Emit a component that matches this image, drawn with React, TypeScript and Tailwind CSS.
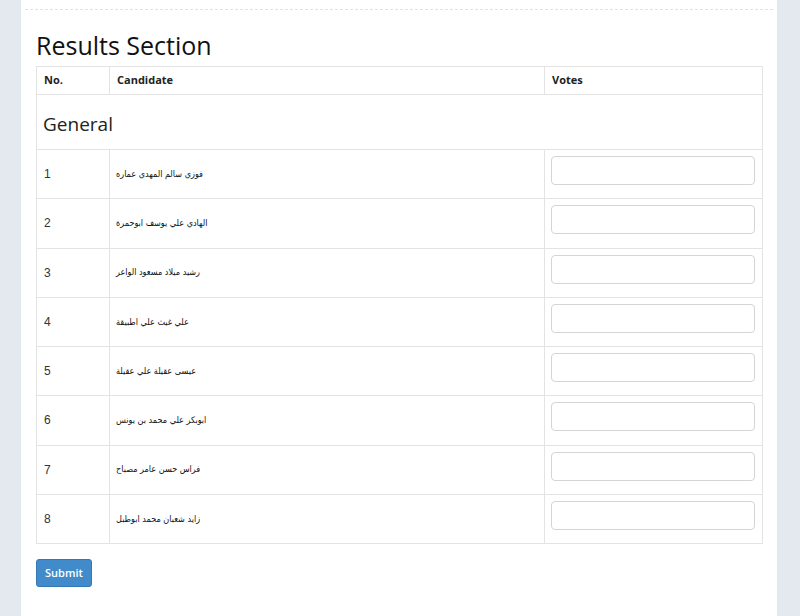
import React from "react";

const CANDIDATES = [
  "فوزي سالم المهدي عماره",
  "الهادي علي يوسف ابوحمرة",
  "رشيد ميلاد مسعود الواعر",
  "علي غيث علي اطبيقة",
  "عيسى عقيلة علي عقيلة",
  "ابوبكر علي محمد بن يونس",
  "فراس حسن عامر مصباح",
  "زايد شعبان محمد ابوطبل",
];

export default function App() {
  return (
    <div className="min-h-[616px] bg-[#e4e9f0] flex" style={{ fontFamily: '"Open Sans", sans-serif' }}>
      <div className="ml-[21px] w-[756px] bg-white min-h-[616px]">
        <div className="mx-1 mt-[9px] border-t border-dashed border-[#dfe3e8]" />

        <div className="px-[15px]">
          <h1 className="mt-[20px] mb-[6px] text-[25px] leading-[30px] text-[#111] font-normal">Results Section</h1>

          <table className="w-[727px] border-collapse text-[#333]">
            <thead>
              <tr className="h-[28px]">
                <th className="w-[73px] border border-[#e3e3e3] px-[7px] text-left text-[11px] font-bold text-[#222]">No.</th>
                <th className="w-[435px] border border-[#e3e3e3] px-[7px] text-left text-[11px] font-bold text-[#222]">Candidate</th>
                <th className="border border-[#e3e3e3] px-[7px] text-left text-[11px] font-bold text-[#222]">Votes</th>
              </tr>
            </thead>
            <tbody>
              <tr className="h-[55px]">
                <td colSpan={3} className="border border-[#e3e3e3] px-[6px] pt-[4px] text-[19px] text-[#222]">General</td>
              </tr>
              {CANDIDATES.map((name, i) => (
                <tr key={i} className="h-[49.25px]">
                  <td className="border border-[#e3e3e3] px-[7px] text-[12px] text-[#333]" style={{ fontFamily: '"Liberation Sans", Arial, sans-serif' }}>
                    {i + 1}
                  </td>
                  <td className="border border-[#e3e3e3] px-[6px] text-[9px] text-[#111]">
                    <span dir="rtl" style={{ fontFamily: '"DejaVu Sans Condensed", "DejaVu Sans", sans-serif' }}>{name}</span>
                  </td>
                  <td className="border border-[#e3e3e3] px-[6px] pt-[6px] align-top">
                    <input
                      type="text"
                      className="block w-[204px] h-[29px] rounded-[4px] border border-[#d5d5d5] bg-white px-2 text-[12px] outline-none"
                    />
                  </td>
                </tr>
              ))}
            </tbody>
          </table>

          <button
            type="button"
            className="mt-[15px] h-[28px] px-[8px] rounded-[3px] border border-[#3278b5] bg-[#428bca] text-white text-[11px] font-semibold"
          >
            Submit
          </button>
        </div>
      </div>
    </div>
  );
}
